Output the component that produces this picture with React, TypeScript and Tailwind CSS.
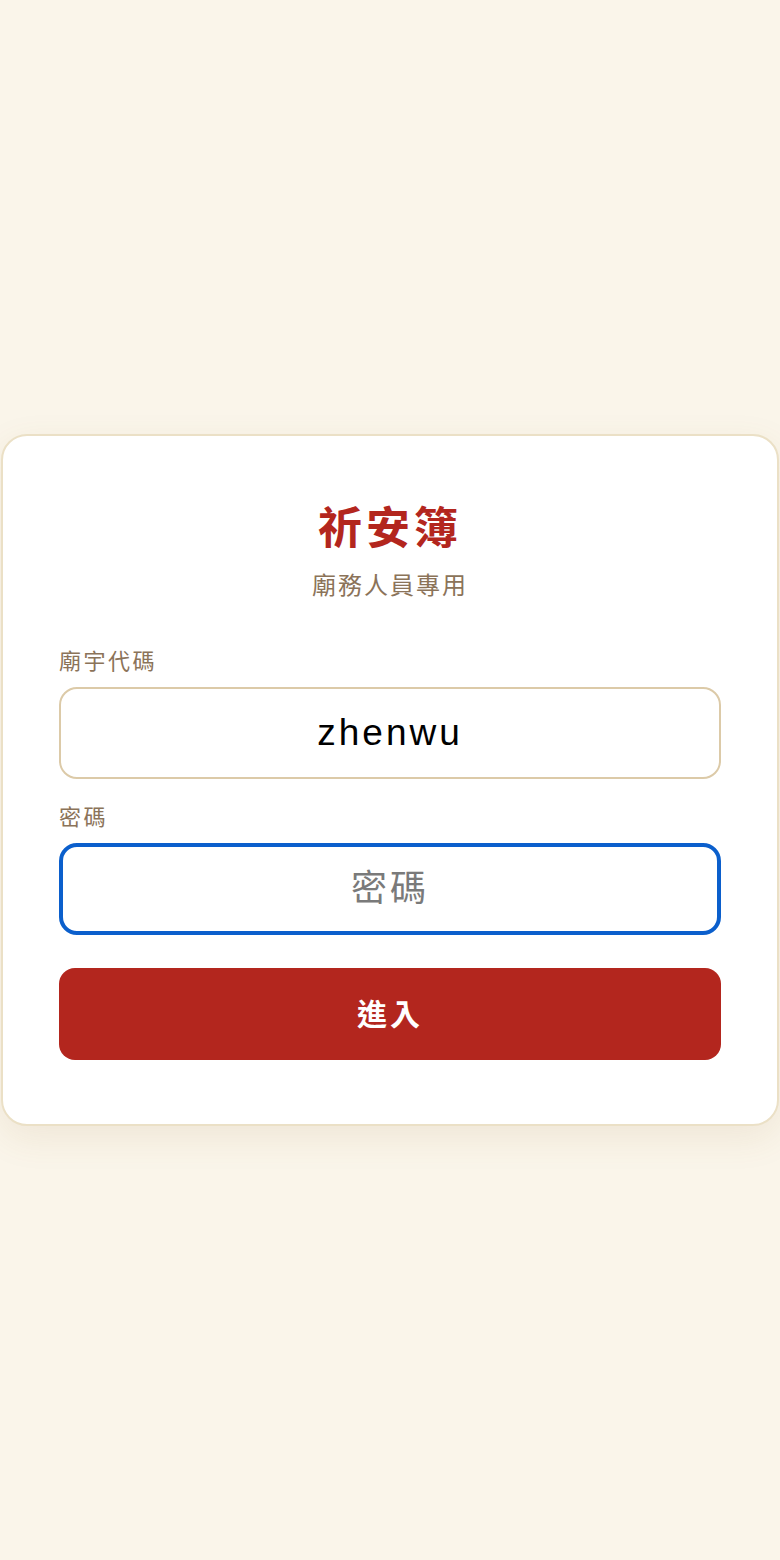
import { useState } from 'react';

const fontStack = "font-['Liberation_Sans','Noto_Sans_CJK_TC',sans-serif]";

function FieldLabel({ children }: { children: string }) {
  return <label className="block text-[22px] leading-[33px] tracking-[2.5px] text-[#8b7359]">{children}</label>;
}

export default function App() {
  const [templeCode, setTempleCode] = useState('zhenwu');
  const [password, setPassword] = useState('');

  return (
    <div className={`flex min-h-[1560px] items-center bg-[#faf5ea] ${fontStack}`}>
      <div className="mx-px w-full rounded-[26px] border-2 border-[#ebe0c6] bg-white px-[56px] pt-[68px] pb-[64px] shadow-[0_12px_36px_rgba(150,110,50,0.10)]">
        <h1 className="text-center text-[44px] font-bold leading-[50px] tracking-[4px] text-[#b3261e]">祈安簿</h1>
        <p className="mt-[14px] text-center text-[24px] leading-[36px] tracking-[2px] text-[#8b7359]">廟務人員專用</p>

        <div className="mt-[41px]">
          <FieldLabel>廟宇代碼</FieldLabel>
          <input
            value={templeCode}
            onChange={(event) => setTempleCode(event.target.value)}
            className="mt-[9px] block h-[92px] w-full rounded-[18px] border-2 border-[#dccaa8] bg-white text-center text-[37px] tracking-[3px] text-black focus:outline-none"
          />
        </div>

        <div className="mt-[22px]">
          <FieldLabel>密碼</FieldLabel>
          <input
            type="password"
            value={password}
            placeholder="密碼"
            onChange={(event) => setPassword(event.target.value)}
            className="mt-[9px] block h-[92px] w-full rounded-[18px] border-[4px] border-[#0b5fcc] bg-white text-center text-[36px] tracking-[3px] text-black placeholder:text-[#7a7a7a] focus:outline-none"
          />
        </div>

        <button
          type="button"
          className="mt-[33px] block h-[92px] w-full rounded-[16px] bg-[#b3261e] text-center text-[30px] font-bold tracking-[3px] text-white"
        >
          進入
        </button>
      </div>
    </div>
  );
}
